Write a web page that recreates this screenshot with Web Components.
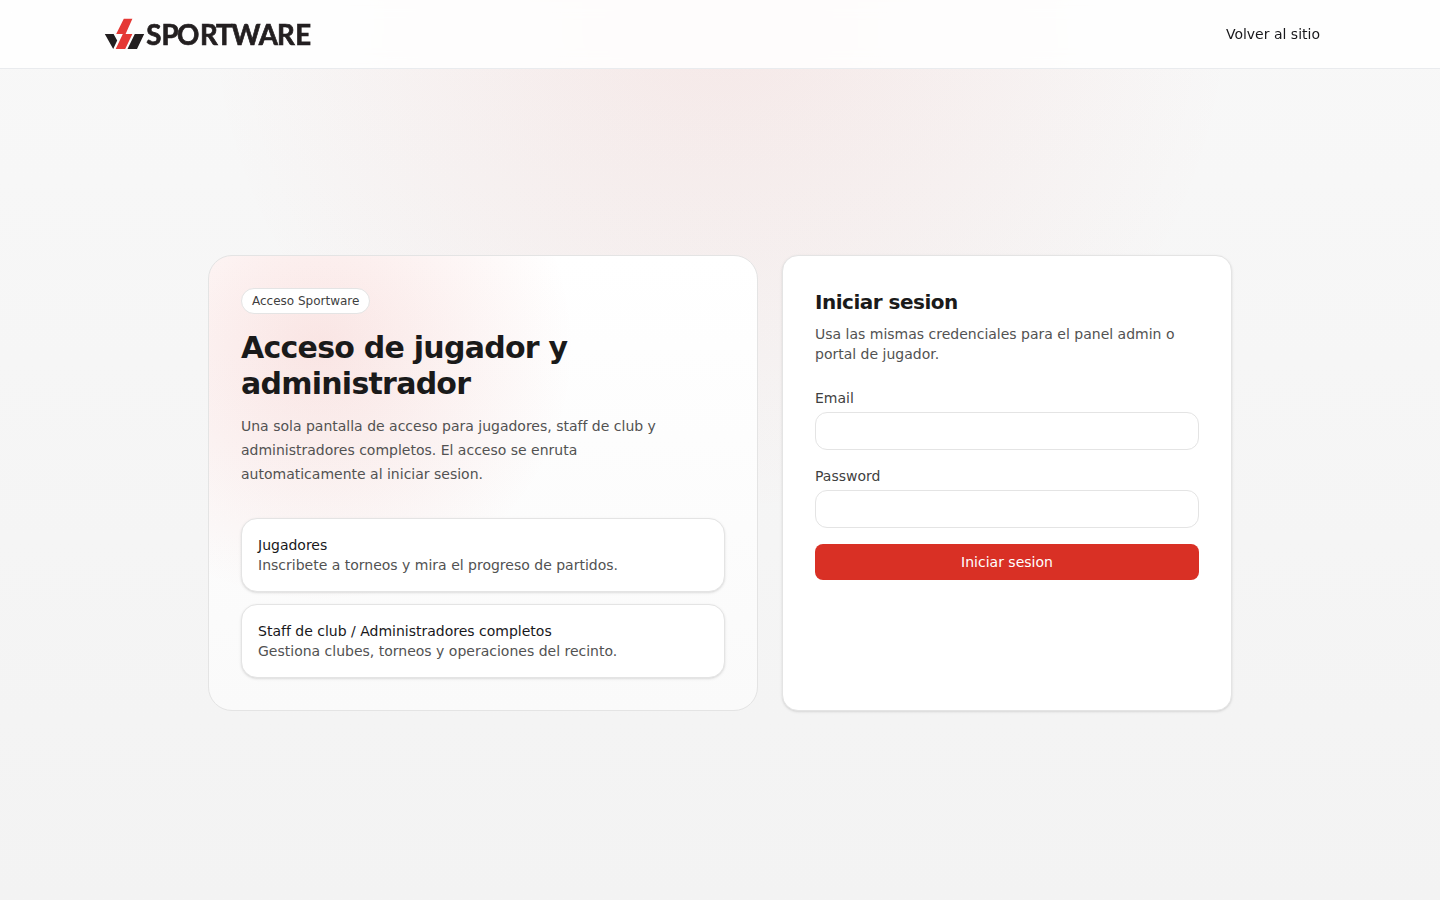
<!DOCTYPE html>
<html lang="es">
<head>
<meta charset="utf-8">
<title>Sportware</title>
<style>
body {
    margin: 0;
    min-height: 100vh;
    font-family: "DejaVu Sans", sans-serif;
    font-size: 14px;
    line-height: 20px;
    color: #18181b;
    background:
        radial-gradient(circle at top, rgba(217, 48, 37, 0.08), transparent 45%),
        linear-gradient(180deg, #f8f8f8, #f3f3f3);
}
</style>
</head>
<body>
<login-page></login-page>

<script>
class SportLogo extends HTMLElement {
    constructor() {
        super();
        this.attachShadow({ mode: "open" }).innerHTML = `
        <style>
        :host { display: block; width: 220px; height: 44px; }
        svg { display: block; overflow: visible; }
        text {
            font: 700 27.6px Lato, sans-serif;
            fill: #231f20;
            stroke: #231f20;
            stroke-width: 0.7px;
        }
        </style>
        <svg width="220" height="44" viewBox="0 -6 220 44" role="img" aria-label="Sportware">
            <path fill="#e53935" d="M19.8.8h8.6L21.6 16h-9.4zM18.8 16h9.6L21.2 31h-9.5z"/>
            <path fill="#231f20" d="M.8 16h8.8l3.6 6.6-4 8.4zM30.8 16h9.4L33 31h-9.5z"/>
            <text x="42.3 57.4 73 96 112 127.6 154.8 173 191.2" y="26.7">SPORTWARE</text>
        </svg>
        `;
    }
}
customElements.define("sport-logo", SportLogo);

class SiteHeader extends HTMLElement {
    constructor() {
        super();
        this.attachShadow({ mode: "open" }).innerHTML = `
        <style>
        :host {
            display: block;
            box-sizing: border-box;
            height: 69px;
            border-bottom: 1px solid #e9ebee;
            background: rgba(255, 255, 255, 0.85);
            backdrop-filter: blur(8px);
        }
        .inner {
            display: flex;
            align-items: center;
            justify-content: space-between;
            height: 68px;
            padding: 0 120px 0 104px;
        }
        a { color: inherit; text-decoration: none; }
        </style>
        <div class="inner">
            <sport-logo></sport-logo>
            <a href="#"><slot></slot></a>
        </div>
        `;
    }
}
customElements.define("site-header", SiteHeader);

class InfoCard extends HTMLElement {
    constructor() {
        super();
        this.attachShadow({ mode: "open" }).innerHTML = `
        <style>
        :host {
            display: block;
            padding: 16px;
            border: 1px solid #e4e4e4;
            border-radius: 16px;
            background: #fff;
            box-shadow: 0 1px 3px rgba(0, 0, 0, 0.1), 0 1px 2px -1px rgba(0, 0, 0, 0.1);
        }
        p { margin: 0; color: #525252; }
        .title { color: #18181b; }
        </style>
        <p class="title"><slot name="title"></slot></p>
        <p><slot></slot></p>
        `;
    }
}
customElements.define("info-card", InfoCard);

class AccessPanel extends HTMLElement {
    constructor() {
        super();
        this.attachShadow({ mode: "open" }).innerHTML = `
        <style>
        :host {
            display: block;
            padding: 32px;
            border: 1px solid #e4e4e4;
            border-radius: 24px;
            background:
                radial-gradient(circle at 20% 20%, rgba(217, 48, 37, 0.12), transparent 45%),
                linear-gradient(180deg, #fff, #fafafa);
        }
        .badge {
            display: inline-block;
            padding: 4px 10px;
            border: 1px solid #e4e4e4;
            border-radius: 999px;
            background: #fff;
            font-size: 12px;
            line-height: 16px;
            color: #3f3f3f;
            vertical-align: top;
        }
        h1 {
            margin: 16px 0 12px;
            font-size: 30px;
            line-height: 36px;
            font-weight: 700;
            letter-spacing: -0.75px;
            color: #1a1a1a;
        }
        .lead { margin: 0; max-width: 448px; line-height: 24px; color: #525252; }
        .cards { display: grid; gap: 12px; margin-top: 32px; }
        </style>
        <span class="badge">Acceso Sportware</span>
        <h1>Acceso de jugador y administrador</h1>
        <p class="lead">Una sola pantalla de acceso para jugadores, staff de club y administradores completos. El acceso se enruta automaticamente al iniciar sesion.</p>
        <div class="cards">
            <info-card><span slot="title">Jugadores</span>Inscribete a torneos y mira el progreso de partidos.</info-card>
            <info-card><span slot="title">Staff de club / Administradores completos</span>Gestiona clubes, torneos y operaciones del recinto.</info-card>
        </div>
        `;
    }
}
customElements.define("access-panel", AccessPanel);

class TextField extends HTMLElement {
    constructor() {
        super();
        this.attachShadow({ mode: "open" }).innerHTML = `
        <style>
        :host { display: block; }
        label { display: block; color: #3f3f3f; }
        input {
            display: block;
            box-sizing: border-box;
            width: 100%;
            height: 38px;
            margin-top: 4px;
            padding: 8px 12px;
            border: 1px solid #e4e4e4;
            border-radius: 12px;
            background: #fff;
            font: inherit;
        }
        </style>
        <label><slot></slot><input type="${this.getAttribute("type")}"></label>
        `;
    }
}
customElements.define("text-field", TextField);

class LoginForm extends HTMLElement {
    constructor() {
        super();
        this.attachShadow({ mode: "open" }).innerHTML = `
        <style>
        :host {
            display: block;
            padding: 32px;
            border: 1px solid #e4e4e4;
            border-radius: 16px;
            background: #fff;
            box-shadow: 0 1px 3px rgba(0, 0, 0, 0.1), 0 1px 2px -1px rgba(0, 0, 0, 0.1);
        }
        h2 {
            margin: 0 0 8px;
            font-size: 20px;
            line-height: 28px;
            font-weight: 700;
            letter-spacing: -0.5px;
            color: #1a1a1a;
        }
        p { margin: 0; color: #525252; }
        form { display: grid; gap: 16px; margin-top: 24px; }
        button {
            height: 36px;
            border: 0;
            border-radius: 8px;
            background: #d93025;
            color: #fff;
            font: inherit;
        }
        </style>
        <h2>Iniciar sesion</h2>
        <p>Usa las mismas credenciales para el panel admin o portal de jugador.</p>
        <form>
            <text-field type="email">Email</text-field>
            <text-field type="password">Password</text-field>
            <button type="button">Iniciar sesion</button>
        </form>
        `;
    }
}
customElements.define("login-form", LoginForm);

class LoginPage extends HTMLElement {
    constructor() {
        super();
        this.attachShadow({ mode: "open" }).innerHTML = `
        <style>
        :host { display: flex; flex-direction: column; height: 100vh; }
        main {
            flex: 1;
            display: grid;
            grid-template-columns: 550px 450px;
            gap: 24px;
            place-content: center;
            padding-bottom: 3px;
        }
        </style>
        <site-header>Volver al sitio</site-header>
        <main>
            <access-panel></access-panel>
            <login-form></login-form>
        </main>
        `;
    }
}
customElements.define("login-page", LoginPage);
</script>
</body>
</html>
